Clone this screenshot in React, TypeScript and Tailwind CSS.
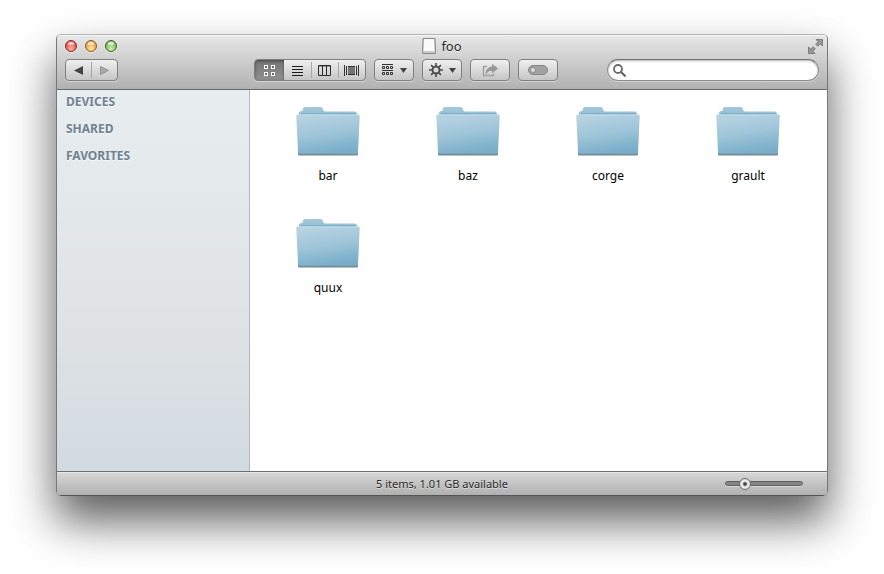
import { useState } from "react"
import type { ReactNode } from "react"
import clsx from "clsx"

const folders = ["bar", "baz", "corge", "grault", "quux"]
const sections = ["DEVICES", "SHARED", "FAVORITES"]

const toolButton =
  "flex h-[22px] items-center justify-center rounded border border-[#808080] bg-linear-to-b from-[#f0f0f0] to-[#c6c6c6] shadow-[0_1px_0_rgba(255,255,255,0.4)]"

function GridIcon() {
  return (
    <svg width="11" height="11" viewBox="0 0 11 11" fill="#6a6a6a" stroke="#fff">
      <rect x="0.5" y="0.5" width="3" height="3" />
      <rect x="7.5" y="0.5" width="3" height="3" />
      <rect x="0.5" y="7.5" width="3" height="3" />
      <rect x="7.5" y="7.5" width="3" height="3" />
    </svg>
  )
}

function ListIcon() {
  return (
    <svg width="11" height="11" viewBox="0 0 11 11" stroke="#1c1c1c">
      <path d="M0 1.5h11M0 4.5h11M0 7.5h11M0 10.5h11" />
    </svg>
  )
}

function ColumnsIcon() {
  return (
    <svg width="13" height="11" viewBox="0 0 13 11" fill="none" stroke="#2c2c2c">
      <path d="M0.5 0.5h12v10h-12zM4.5 0v10M8.5 0v10" />
      <path d="M0 1.5h13" strokeOpacity="0.4" />
    </svg>
  )
}

function CoverFlowIcon() {
  return (
    <svg width="15" height="11" viewBox="0 0 15 11" fill="none" stroke="#333">
      <path d="M0.5 0v11M2.5 1v9M12.5 1v9M14.5 0v11" />
      <rect x="4" y="1" width="7" height="9" fill="#747474" stroke="none" />
      <path d="M4 1.5h7M4 9.5h7" />
    </svg>
  )
}

function ArrangeIcon() {
  return (
    <svg width="11" height="12" viewBox="0 0 11 12" fill="none" stroke="#333">
      <path d="M0 0.5h11M0 6.5h11" />
      <path d="M0.5 2.5h2v2h-2zM4.5 2.5h2v2h-2zM8.5 2.5h2v2h-2zM0.5 8.5h2v2h-2zM4.5 8.5h2v2h-2zM8.5 8.5h2v2h-2z" />
    </svg>
  )
}

function GearIcon() {
  return (
    <svg width="14" height="14" viewBox="-7 -7 14 14" fill="none" stroke="#4c4c4c">
      <circle r="3.5" strokeWidth="2" />
      <path
        d="M0 -7V-4M0 7V4M-7 0H-4M7 0H4M-4.9 -4.9L-2.9 -2.9M4.9 4.9L2.9 2.9M-4.9 4.9L-2.9 2.9M4.9 -4.9L2.9 -2.9"
        strokeWidth="1.6"
      />
    </svg>
  )
}

function DownArrow() {
  return (
    <svg width="7" height="5" viewBox="0 0 7 5" fill="#444">
      <path d="M0 0h7L3.5 5z" />
    </svg>
  )
}

function ShareIcon() {
  return (
    <svg width="16" height="13" viewBox="0 0 16 13">
      <path d="M5 2.5H1.500v9h10V9.500" fill="none" stroke="#a0a0a0" strokeWidth="1.4" />
      <path
        d="M10.500 0.500L15.500 4.500L10.500 8.500V6.300C7.500 6.200 5.500 7.200 4 9.500C4.300 5.500 6.500 3 10.500 2.700z"
        fill="#999"
        stroke="#848484"
        strokeWidth="0.600"
      />
    </svg>
  )
}

function TagIcon() {
  return (
    <svg width="20" height="10" viewBox="0 0 20 10">
      <rect x="0.5" y="0.5" width="19" height="9" rx="4.5" fill="#a2a2a2" stroke="#868686" />
      <circle cx="5" cy="5" r="2.500" fill="#dedede" stroke="#808080" strokeWidth="0.8" />
    </svg>
  )
}

function FullScreenIcon() {
  return (
    <svg width="15" height="15" viewBox="0 0 15 15" fill="#979797" stroke="#6e6e6e" strokeWidth="0.8">
      <path d="M8 0.500H14.500V7L12.300 4.900L9.800 7.300L7.700 5.200L10.100 2.700z" />
      <path d="M7 14.500H0.500V8L2.700 10.100L5.200 7.700L7.300 9.800L4.900 12.300z" />
    </svg>
  )
}

function DiskIcon() {
  return (
    <svg width="14" height="16" viewBox="0 0 14 16">
      <path d="M1 0.500h12l0.500 13v2h-13v-2z" fill="#bdbdbd" stroke="#8a8a8a" />
      <path d="M2 1h10l0.500 12H1.500z" fill="#fbfbfb" />
      <path d="M1 14h12" stroke="#d6d6d6" />
    </svg>
  )
}

function FolderIcon() {
  return (
    <svg width="64" height="50" viewBox="0 0 64 50">
      <defs>
        <linearGradient id="folder-back" x1="0" y1="0" x2="0" y2="1">
          <stop offset="0" stopColor="#a3c8dc" />
          <stop offset="1" stopColor="#8fbcd3" />
        </linearGradient>
        <linearGradient id="folder-front" x1="0.250" y1="0" x2="0.500" y2="1">
          <stop offset="0" stopColor="#b7d3e2" />
          <stop offset="0.500" stopColor="#9fc5d9" />
          <stop offset="0.850" stopColor="#82b4cd" />
          <stop offset="1" stopColor="#7aaec8" />
        </linearGradient>
      </defs>
      <path d="M2 46h60v2.500q0 1-1 1H3q-1 0-1-1z" fill="#74889a" />
      <path
        d="M3 8V6.500Q3 5.500 4.500 5.200L6 4.900Q6.500 4.800 6.700 3.800L7.200 2Q7.600 1 9 1H24.500Q26 1 26.500 2.200L27.500 4.600Q27.900 5.500 29 5.500H59Q61 5.500 61 8V12H3z"
        fill="url(#folder-back)"
      />
      <path d="M5 7.500H60" stroke="#78a9c3" strokeWidth="0.800" />
      <path
        d="M1.800 8.500H62.200Q63.800 8.500 63.700 10L62 46.500Q61.900 47.800 60.500 47.800H3.500Q2.100 47.800 2 46.500L0.300 10Q0.200 8.500 1.800 8.500z"
        fill="url(#folder-front)"
      />
      <path d="M1.500 9H62.500" stroke="#c5ddea" strokeWidth="0.8" />
    </svg>
  )
}

const lights = [
  { name: "Close", color: "border-[#8a2a26] bg-radial-[at_50%_80%] from-[#ffb0a8] to-[#dc3732]" },
  { name: "Minimize", color: "border-[#91581f] bg-radial-[at_50%_80%] from-[#ffe3a0] to-[#dd9136]" },
  { name: "Zoom", color: "border-[#3a652b] bg-radial-[at_50%_80%] from-[#cff4ae] to-[#5fa548]" },
]

const views: { name: string; icon: ReactNode; width: string }[] = [
  { name: "Icons", icon: <GridIcon />, width: "w-[29px]" },
  { name: "List", icon: <ListIcon />, width: "w-[27px]" },
  { name: "Columns", icon: <ColumnsIcon />, width: "w-[27px]" },
  { name: "Cover Flow", icon: <CoverFlowIcon />, width: "w-[27px]" },
]

function TitleBar() {
  return (
    <div className="grid h-[22px] grid-cols-[1fr_auto_1fr] items-center px-2">
      <div className="flex gap-2">
        {lights.map((light) => (
          <button
            key={light.name}
            aria-label={light.name}
            className={clsx(
              "flex h-3 w-3 justify-center rounded-full border shadow-[0_1px_0_rgba(255,255,255,0.5)]",
              light.color,
            )}
          >
            <span className="mt-px h-[3px] w-1.5 rounded-full bg-white/60" />
          </button>
        ))}
      </div>
      <h1 className="flex items-center gap-[5px] text-[13px] leading-4 text-[#2b2b2b] [text-shadow:0_1px_0_rgba(255,255,255,0.5)]">
        <DiskIcon />
        foo
      </h1>
      <button aria-label="Full screen" className="-mr-1 justify-self-end">
        <FullScreenIcon />
      </button>
    </div>
  )
}

function Toolbar() {
  const [view, setView] = useState("Icons")

  return (
    <div className="flex h-8 items-start px-2 pt-0.5">
      <div className={clsx(toolButton, "w-[53px] shrink-0")}>
        <button aria-label="Back" className="flex h-full flex-1 items-center justify-center">
          <svg width="9" height="9" viewBox="0 0 9 9" fill="#444">
            <path d="M9 0v9L0 4.500z" />
          </svg>
        </button>
        <span className="h-4 w-px bg-[#a5a5a5]" />
        <button aria-label="Forward" className="flex h-full flex-1 items-center justify-center">
          <svg width="9" height="9" viewBox="0 0 9 9" fill="#aaa" stroke="#888" strokeWidth="0.8">
            <path d="M0.500 0.500v8l8-4z" />
          </svg>
        </button>
      </div>

      <div className="ml-[136px] flex shrink-0 gap-2">
        <div className={clsx(toolButton, "overflow-hidden")}>
          {views.map((item, i) => (
            <button
              key={item.name}
              aria-label={item.name}
              aria-pressed={view === item.name}
              onClick={() => setView(item.name)}
              className={clsx(
                "relative flex h-full items-center justify-center",
                item.width,
                view === item.name && "bg-linear-to-b from-[#757575] to-[#919191] shadow-[inset_0_1px_3px_rgba(0,0,0,0.45)]",
              )}
            >
              {i > 1 && <span className="absolute left-0 h-4 w-px bg-[#a8a8a8]" />}
              {item.icon}
            </button>
          ))}
        </div>
        <button aria-label="Arrange" className={clsx(toolButton, "w-10 gap-[7px]")}>
          <ArrangeIcon />
          <DownArrow />
        </button>
        <button aria-label="Action" className={clsx(toolButton, "w-10 gap-1.5")}>
          <GearIcon />
          <DownArrow />
        </button>
        <button aria-label="Share" className={clsx(toolButton, "w-10")}>
          <ShareIcon />
        </button>
        <button aria-label="Edit tags" className={clsx(toolButton, "w-10")}>
          <TagIcon />
        </button>
      </div>

      <label className="ml-auto flex h-[22px] w-[212px] items-center rounded-full border border-[#8e8e8e] border-t-[#707070] bg-white px-[5px] shadow-[inset_0_1px_2px_rgba(0,0,0,0.3),0_1px_0_rgba(255,255,255,0.4)]">
        <svg width="13" height="13" viewBox="0 0 13 13" fill="none" stroke="#6b6b6b">
          <circle cx="5" cy="5" r="4" strokeWidth="1.8" />
          <path d="M8 8l3.800 3.800" strokeWidth="2.300" strokeLinecap="round" />
        </svg>
        <input type="search" aria-label="Search" className="ml-1 min-w-0 flex-1 bg-transparent text-xs outline-none" />
      </label>
    </div>
  )
}

function Sidebar() {
  return (
    <aside className="flex w-[193px] shrink-0 flex-col gap-[11px] border-r border-[#b4b8bb] bg-linear-to-b from-[#e8edf0] via-[#dee2e4] via-65% to-[#d2dae2] px-[9px] pt-1">
      {sections.map((section) => (
        <h2
          key={section}
          className="text-xs leading-4 font-bold text-[#708291] [text-shadow:0_1px_0_rgba(255,255,255,0.7)]"
        >
          {section}
        </h2>
      ))}
    </aside>
  )
}

function StatusBar() {
  return (
    <footer className="grid h-6 grid-cols-[1fr_auto_1fr] items-center border-t border-[#707070] bg-linear-to-b from-[#d8d8d8] to-[#b0b0b0] px-6 shadow-[inset_0_1px_0_rgba(255,255,255,0.4)]">
      <p className="col-start-2 text-[11px] leading-4 text-[#2b2b2b] [text-shadow:0_1px_0_rgba(255,255,255,0.5)]">
        5 items, 1.01 GB available
      </p>
      <input
        type="range"
        aria-label="Icon size"
        min="0"
        max="100"
        defaultValue="21"
        className="h-[5px] w-[78px] appearance-none justify-self-end rounded-full border border-[#606060] bg-[#858585] shadow-[0_1px_0_rgba(255,255,255,0.4)] [&::-webkit-slider-thumb]:h-3 [&::-webkit-slider-thumb]:w-3 [&::-webkit-slider-thumb]:appearance-none [&::-webkit-slider-thumb]:rounded-full [&::-webkit-slider-thumb]:border [&::-webkit-slider-thumb]:border-[#707070] [&::-webkit-slider-thumb]:bg-[radial-gradient(circle,#444_0_1px,#f6f6f6_3px,#c8c8c8_6px)]"
      />
    </footer>
  )
}

export default function App() {
  return (
    <div className="flex min-h-screen flex-col bg-white px-14 pt-[34px] pb-[78px] font-['Noto_Sans','Open_Sans',sans-serif]">
      <main className="flex flex-1 flex-col overflow-hidden rounded-[5px] border border-[#777] border-t-[#b5b5b5] border-b-[#555] shadow-[0_25px_45px_rgba(0,0,0,0.64)]">
        <header className="border-b border-[#686868] bg-linear-to-b from-[#e8e8e8] to-[#b1b1b1] shadow-[inset_0_1px_0_rgba(255,255,255,0.6)]">
          <TitleBar />
          <Toolbar />
        </header>

        <div className="flex flex-1">
          <Sidebar />
          <section className="grid flex-1 grid-cols-[repeat(auto-fill,140px)] content-start gap-y-[34px] bg-white px-2 pt-4">
            {folders.map((name) => (
              <button key={name} className="flex flex-col items-center gap-3 text-xs leading-4 text-black">
                <FolderIcon />
                {name}
              </button>
            ))}
          </section>
        </div>

        <StatusBar />
      </main>
    </div>
  )
}
